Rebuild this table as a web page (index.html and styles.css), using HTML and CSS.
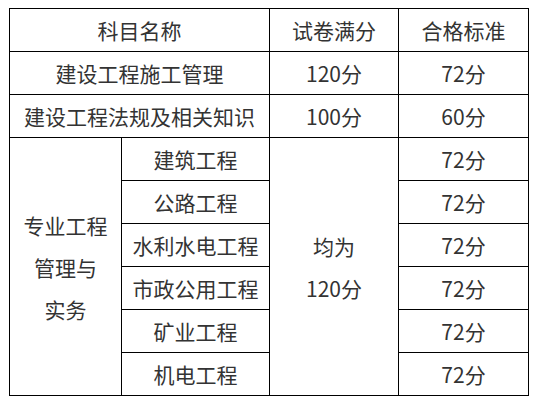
FILE: index.html
```html
<!DOCTYPE html>
<html lang="zh-CN">
<head>
<meta charset="utf-8">
<link rel="stylesheet" href="styles.css">
</head>
<body>
<table class="score-table">
  <colgroup>
    <col class="c1"><col class="c2"><col class="c3"><col class="c4">
  </colgroup>
  <tr>
    <td colspan="2">科目名称</td>
    <td>试卷满分</td>
    <td>合格标准</td>
  </tr>
  <tr>
    <td colspan="2">建设工程施工管理</td>
    <td>120分</td>
    <td>72分</td>
  </tr>
  <tr>
    <td colspan="2">建设工程法规及相关知识</td>
    <td>100分</td>
    <td>60分</td>
  </tr>
  <tr>
    <td rowspan="6" class="multi">专业工程<br>管理与<br>实务</td>
    <td>建筑工程</td>
    <td rowspan="6" class="multi">均为<br>120分</td>
    <td>72分</td>
  </tr>
  <tr><td>公路工程</td><td>72分</td></tr>
  <tr><td>水利水电工程</td><td>72分</td></tr>
  <tr><td>市政公用工程</td><td>72分</td></tr>
  <tr><td>矿业工程</td><td>72分</td></tr>
  <tr><td>机电工程</td><td>72分</td></tr>
</table>
</body>
</html>
```
FILE: styles.css
```css
html, body {
  margin: 0;
  padding: 0;
  background: #fff;
}
body {
  padding: 8px 0 0 9px;
  font-family: "Noto Sans CJK SC", "Noto Sans", sans-serif;
  color: #333;
}
.score-table {
  border-collapse: collapse;
  table-layout: fixed;
  width: 519px;
}
.c1 { width: 112px; }
.c2 { width: 148px; }
.c3 { width: 129px; }
.c4 { width: 130px; }
.score-table td {
  border: 1px solid #000;
  height: 42px;
  padding: 0 10px;
  text-align: center;
  vertical-align: middle;
  font-size: 21px;
  line-height: 28px;
  white-space: nowrap;
}
.score-table td.multi {
  line-height: 42px;
}
```
